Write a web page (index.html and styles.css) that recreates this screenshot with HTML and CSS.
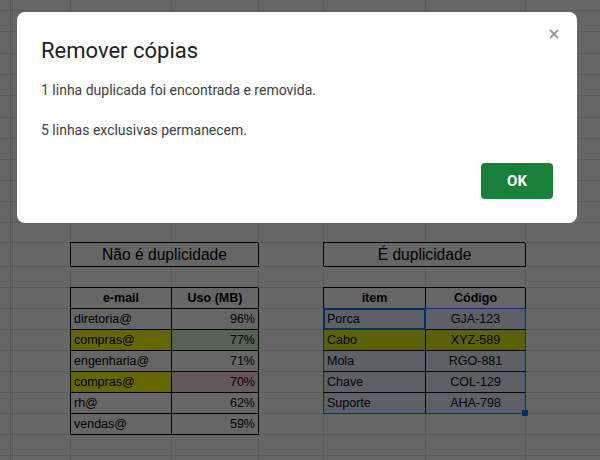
FILE: index.html
```html
<!DOCTYPE html>
<html lang="pt-BR">
<head>
<meta charset="utf-8">
<title>Remover cópias</title>
<link rel="stylesheet" href="styles.css">
</head>
<body>
<div class="sheet">
  <div class="row h11"><span></span><span></span><span></span><span></span><span></span><span></span><span></span><span></span><span></span></div>
  <div class="row h21"><span></span><span></span><span></span><span></span><span></span><span></span><span></span><span></span><span></span></div>
  <div class="row h22"><span></span><span></span><span></span><span></span><span></span><span></span><span></span><span></span><span></span></div>
  <div class="row h21"><span></span><span></span><span></span><span></span><span></span><span></span><span></span><span></span><span></span></div>
  <div class="row h21"><span></span><span></span><span></span><span></span><span></span><span></span><span></span><span></span><span></span></div>
  <div class="row h22"><span></span><span></span><span></span><span></span><span></span><span></span><span></span><span></span><span></span></div>
  <div class="row h21"><span></span><span></span><span></span><span></span><span></span><span></span><span></span><span></span><span></span></div>
  <div class="row h21"><span></span><span></span><span></span><span></span><span></span><span></span><span></span><span></span><span></span></div>
  <div class="row h21"><span></span><span></span><span></span><span></span><span></span><span></span><span></span><span></span><span></span></div>
  <div class="row h21"><span></span><span></span><span></span><span></span><span></span><span></span><span></span><span></span><span></span></div>
  <div class="row h21"><span></span><span></span><span></span><span></span><span></span><span></span><span></span><span></span><span></span></div>
  <div class="row h20"><span></span><span></span><span></span><span></span><span></span><span></span><span></span><span></span><span></span></div>
  <div class="row h24"><span></span><span></span><span></span><div class="t title c2">Não é duplicidade</div><span></span><div class="t title c2">É duplicidade</div><span></span></div>
  <div class="row h21"><span></span><span></span><span></span><span></span><span></span><span></span><span></span><span></span><span></span></div>
  <div class="row h21"><span></span><span></span><span></span><div class="t th">e-mail</div><div class="t th">Uso (MB)</div><span></span><div class="t th">item</div><div class="t th">Código</div><span></span></div>
  <div class="row h21"><span></span><span></span><span></span><div class="t">diretoria@</div><div class="t num">96%</div><span></span><div class="t">Porca</div><div class="t ctr">GJA-123</div><span></span></div>
  <div class="row h21"><span></span><span></span><span></span><div class="t yellow">compras@</div><div class="t num green">77%</div><span></span><div class="t yellow">Cabo</div><div class="t ctr yellow">XYZ-589</div><span></span></div>
  <div class="row h21"><span></span><span></span><span></span><div class="t">engenharia@</div><div class="t num">71%</div><span></span><div class="t">Mola</div><div class="t ctr">RGO-881</div><span></span></div>
  <div class="row h21"><span></span><span></span><span></span><div class="t yellow">compras@</div><div class="t num pink">70%</div><span></span><div class="t">Chave</div><div class="t ctr">COL-129</div><span></span></div>
  <div class="row h21"><span></span><span></span><span></span><div class="t">rh@</div><div class="t num">62%</div><span></span><div class="t">Suporte</div><div class="t ctr">AHA-798</div><span></span></div>
  <div class="row h21"><span></span><span></span><span></span><div class="t">vendas@</div><div class="t num">59%</div><span></span><span></span><span></span><span></span></div>
  <div class="row h21"><span></span><span></span><span></span><span></span><span></span><span></span><span></span><span></span><span></span></div>
  <div class="row h10"><span></span><span></span><span></span><span></span><span></span><span></span><span></span><span></span><span></span></div>

  <div class="sel"><div class="active"></div><div class="handle"></div></div>
</div>

<div class="scrim"></div>

<div class="dialog" role="dialog" aria-labelledby="dlg-title">
  <button class="close" aria-label="Fechar">
    <svg width="10" height="10" viewBox="0 0 10 10"><path d="M1 1L9 9M9 1L1 9" stroke="#9a9a9a" stroke-width="2" fill="none"/></svg>
  </button>
  <h1 class="title" id="dlg-title">Remover cópias</h1>
  <p class="msg">1 linha duplicada foi encontrada e removida.</p>
  <p class="msg msg2">5 linhas exclusivas permanecem.</p>
  <div class="actions"><button class="ok">OK</button></div>
</div>
</body>
</html>
```

FILE: styles.css
```css
html, body {
  margin: 0;
  padding: 0;
}
body {
  width: 600px;
  height: 460px;
  overflow: hidden;
  background: #fff;
  position: relative;
}

/* spreadsheet */
.sheet {
  position: relative;
  width: 610px;
  font-family: "Liberation Sans", Arial, sans-serif;
  font-size: 12.5px;
  color: #000;
}
.row {
  display: grid;
  grid-template-columns: 11px 2px 58px 101px 87px 65px 102px 100px 84px;
}
.row > * {
  box-sizing: border-box;
  border-right: 1px solid #e2e3e3;
  border-bottom: 1px solid #e2e3e3;
  white-space: nowrap;
  overflow: hidden;
  background: #fff;
}
.h10 { height: 10px; }
.h11 { height: 11px; }
.h20 { height: 20px; }
.h21 { height: 21px; line-height: 20px; }
.h22 { height: 22px; }
.h24 { height: 24px; line-height: 23px; }

.t {
  padding: 0 3px;
  border-right-color: #000 !important;
  border-bottom-color: #000 !important;
  box-shadow: -1px -1px 0 #000;
  overflow: visible !important;
}
.c2 { grid-column: span 2; }
.title {
  text-align: center;
  font-size: 15.6px;
}
.th {
  text-align: center;
  font-weight: bold;
}
.num { text-align: right; }
.ctr { text-align: center; }
.yellow { background: #ffff00 !important; }
.green { background: #d7f5d2 !important; }
.pink { background: #f9dbe6 !important; }

/* selection */
.sel {
  position: absolute;
  left: 323px;
  top: 308px;
  width: 203px;
  height: 106px;
  box-sizing: border-box;
  border: 1px solid #1a73e8;
  background: rgba(26, 115, 232, 0.1);
}
.active {
  position: absolute;
  left: -1px;
  top: -1px;
  width: 103px;
  height: 22px;
  box-sizing: border-box;
  border: 2px solid #1a73e8;
}
.handle {
  position: absolute;
  left: 198px;
  top: 101px;
  width: 6px;
  height: 6px;
  background: #1a73e8;
}

/* modal */
.scrim {
  position: absolute;
  inset: 0;
  background: rgba(0, 0, 0, 0.6);
}
.dialog {
  position: absolute;
  left: 17px;
  top: 12px;
  width: 560px;
  box-sizing: border-box;
  padding: 25px 24px 24px 24px;
  background: #fff;
  border-radius: 8px;
  font-family: Roboto, "Noto Sans", sans-serif;
}
.close {
  position: absolute;
  left: 532px;
  top: 17px;
  width: 10px;
  height: 10px;
  padding: 0;
  margin: 0;
  border: 0;
  background: none;
  display: block;
  line-height: 0;
}
.close svg { display: block; }
.title {
  margin: 0;
}
.dialog .title {
  font-size: 22px;
  font-weight: 400;
  line-height: 28px;
  color: #202124;
  text-align: left;
}
.msg {
  margin: 15px 0 0;
  font-size: 14px;
  line-height: 20px;
  color: #3c4043;
}
.msg2 { margin-top: 20px; }
.actions {
  display: flex;
  justify-content: flex-end;
  margin-top: 23px;
}
.ok {
  width: 72px;
  height: 36px;
  border: 0;
  border-radius: 4px;
  background: #188038;
  color: #fff;
  font-family: Roboto, "Noto Sans", sans-serif;
  font-size: 15px;
  font-weight: 700;
  padding: 0;
}
```
